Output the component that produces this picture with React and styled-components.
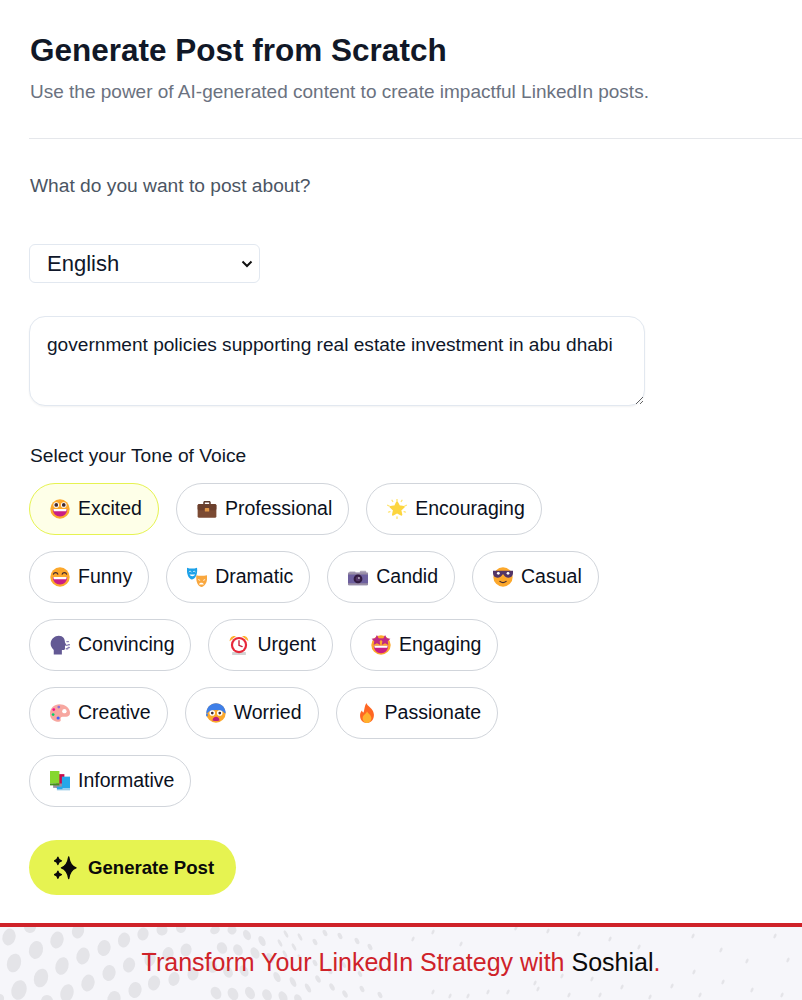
import React from "react";
import styled, { createGlobalStyle } from "styled-components";

const Global = createGlobalStyle`
  html, body { margin: 0; padding: 0; background: #fff; overflow: hidden; }
  * { box-sizing: border-box; }
`;

const Page = styled.div`
  width: 802px;
  height: 1000px;
  display: flex;
  flex-direction: column;
  font-family: "Liberation Sans", Arial, sans-serif;
  color: #0f172a;
`;
const Main = styled.main`
  flex: 1;
  padding: 32px 0 0 29px;
`;
const Title = styled.h1`
  margin: 0;
  font-size: 31.500px;
  line-height: 36px;
  font-weight: 700;
  color: #111827;
  padding-left: 1px;
`;
const Subtitle = styled.p`
  margin: 10px 0 0;
  font-size: 19px;
  line-height: 28px;
  color: #6b7280;
  padding-left: 1px;
`;
const Divider = styled.hr`
  margin: 32px 0 33px;
  border: 0;
  border-top: 1px solid #e5e7eb;
`;
const Label = styled.label`
  display: block;
  font-size: 19.200px;
  line-height: 28px;
  padding-left: 1px;
  color: ${(p) => (p.$muted ? "#4b5563" : "#111827")};
`;
const LangSelect = styled.select`
  display: block;
  appearance: none;
  margin-top: 44px;
  width: 231px;
  height: 39px;
  padding: 0 8px 0 17px;
  background: #fff url("data:image/svg+xml,%3Csvg xmlns='http://www.w3.org/2000/svg' width='12' height='8' viewBox='0 0 12 8'%3E%3Cpath d='M1.500 1.500 6 6l4.500-4.500' fill='none' stroke='%23111' stroke-width='2'/%3E%3C/svg%3E") no-repeat 211px 15px;
  border: 1px solid #e2e8f0;
  border-radius: 6px;
  font-family: inherit;
  font-size: 22px;
  color: #0f172a;
`;
const Prompt = styled.textarea`
  display: block;
  margin: 33px 0 36px;
  width: 616px;
  height: 90px;
  padding: 14px 17px;
  border: 1px solid #e2e8f0;
  border-radius: 16px;
  box-shadow: 0 1px 2px rgba(0, 0, 0, 0.05);
  font-family: inherit;
  font-size: 19.100px;
  line-height: 28px;
  color: #0f172a;
  outline: none;
`;
const Chips = styled.div`
  margin-top: 13px;
  width: 616px;
  display: flex;
  flex-wrap: wrap;
  gap: 16px 17px;
`;
const Chip = styled.button`
  height: 52px;
  display: inline-flex;
  align-items: center;
  gap: 8px;
  padding: 0 16px 2px 20px;
  border-radius: 26px;
  border: 1px solid ${(p) => (p.$active ? "#e6f351" : "#d1d5db")};
  background: ${(p) => (p.$active ? "#feffe8" : "#fff")};
  font-family: inherit;
  font-size: 19.500px;
  color: #0b1020;
`;
const Generate = styled.button`
  margin-top: 33px;
  width: 207px;
  height: 55px;
  display: flex;
  align-items: center;
  gap: 11px;
  padding: 0 0 0 25px;
  border: 0;
  border-radius: 28px;
  background: #e6f351;
  font-family: inherit;
  font-size: 18.600px;
  font-weight: 700;
  color: #0a0a0a;
`;
const Footer = styled.footer`
  position: relative;
  height: 77px;
  flex: none;
  border-top: 4px solid #cf2229;
  background: #f6f6fa;
  overflow: hidden;
  display: flex;
  align-items: center;
  justify-content: center;
`;
const FooterArt = styled.svg`
  position: absolute;
  left: 0;
  top: 0;
`;
const Slogan = styled.p`
  position: relative;
  margin: 0 0 3px;
  font-size: 25px;
  line-height: 30px;
  color: #cf2229;
`;
const Brand = styled.span`
  color: #0a0a0a;
`;
const EmojiBox = styled.svg`
  width: 20px;
  height: 20px;
  flex: none;
  margin-top: 2px;
`;

const Emoji = ({ children }) => <EmojiBox viewBox="0 0 32 32">{children}</EmojiBox>;

const Face = () => <circle cx="16" cy="16" r="15.500" fill="#fca82c" />;
const Mouth = ({ y = 16 }) => (
  <>
    <path d={`M4.500 ${y}h23c0 7-5 12-11.500 12S4.500 ${y + 7} 4.500 ${y}z`} fill="#c81e85" />
    <path d={`M5.500 ${y}h21c0 2-.5 3.500-1 3.500H6.500c-.5 0-1-1.500-1-3.500z`} fill="#fff" />
  </>
);
const icons = {
  excited: (
    <Emoji>
      <Face />
      <circle cx="10" cy="9.500" r="4.500" fill="#fff" />
      <circle cx="22" cy="9.500" r="4.500" fill="#fff" />
      <circle cx="10" cy="9.500" r="3" fill="#402a32" />
      <circle cx="22" cy="9.500" r="3" fill="#402a32" />
      <Mouth />
    </Emoji>
  ),
  funny: (
    <Emoji>
      <Face />
      <path d="M5.500 11.500c1-3.500 6-3.500 7 0M19.500 11.500c1-3.500 6-3.500 7 0" fill="none" stroke="#402a32" strokeWidth="2" strokeLinecap="round" />
      <Mouth />
    </Emoji>
  ),
  professional: (
    <Emoji>
      <path d="M10 9V5.500C10 4 11 3 12.500 3h7C21 3 22 4 22 5.500V9h-2.500V5.500h-7V9z" fill="#5c3a2c" />
      <rect x="1" y="8" width="30" height="22" rx="2.500" fill="#7b4a33" />
      <rect x="1" y="8" width="30" height="10" rx="2.500" fill="#6b3f2c" />
      <rect x="12.500" y="14.500" width="7" height="5.500" rx="1" fill="#e19747" />
    </Emoji>
  ),
  encouraging: (
    <Emoji>
      <path d="M16 5l3.500 6.500 7.500 1-5.500 5.200 1.500 7.500L16 21.500l-6.500 3.700 1.500-7.500-5.500-5.200 7.500-1z" fill="#fcd53f" strokeLinejoin="round" stroke="#fcd53f" strokeWidth="3" />
      <path d="M16 .8v2.200M16 28.500v2.700M1 10l2.500 1.200M31 10l-2.500 1.200M2.500 21l2.200-.7M29.500 21l-2.200-.7M8 2l1.200 2M24 2l-1.200 2" stroke="#ffe571" strokeWidth="2.200" strokeLinecap="round" />
    </Emoji>
  ),
  dramatic: (
    <Emoji>
      <path d="M0 1c5 1.800 11 1.800 16 0 1 8-.5 17-8 19C1.500 18.500-1 9 0 1z" fill="#1da1e8" />
      <path d="M3 8c1-1.500 3-1.500 4 0M9.500 8c1-1.500 3-1.500 4 0" fill="none" stroke="#fff" strokeWidth="1.300" />
      <path d="M4 12c2 3.500 7 3.500 9 0z" fill="#fff" />
      <path d="M15 13c4 1.400 11 1.400 17 0 1 8-1 17-9 19-7-2-9-11-8-19z" fill="#f9a73e" />
      <path d="M18 20l3 1.500M29 20l-3 1.500" stroke="#fff" strokeWidth="1.300" />
      <path d="M19 28c1-3.500 7-3.500 8 0z" fill="#fff" />
    </Emoji>
  ),
  candid: (
    <Emoji>
      <rect x="2" y="7" width="10" height="5" rx="1" fill="#b4acbc" />
      <rect x="19" y="6" width="10" height="6" rx="1" fill="#b4acbc" />
      <rect x="0" y="9" width="32" height="20" rx="2" fill="#6d5f9e" />
      <rect x="0" y="9" width="32" height="3" fill="#998ea4" />
      <rect x="0" y="26" width="32" height="3" fill="#998ea4" />
      <circle cx="16" cy="19" r="7" fill="#321b41" />
      <circle cx="16" cy="19" r="3.800" fill="#533566" />
      <circle cx="17.500" cy="17.500" r="1.300" fill="#fff" />
    </Emoji>
  ),
  casual: (
    <Emoji>
      <Face />
      <path d="M0 6h32v4c0 4-3 7-7 7-4 0-7-2-8-5h-2c-1 3-4 5-8 5-4 0-7-3-7-7z" fill="#533566" />
      <circle cx="8.500" cy="10" r="2.200" fill="#fff" />
      <circle cx="24" cy="10" r="2.200" fill="#fff" />
      <path d="M11 23c3 2.500 7 2.500 10 0" fill="none" stroke="#402a32" strokeWidth="2" strokeLinecap="round" />
    </Emoji>
  ),
  convincing: (
    <Emoji>
      <path d="M1 14C1 6 8 1 14 1c7 0 10 5 10 11 1 2 2 3 2 4l-2 1v4c0 2-1 3-3 3h-2v7H6v-7c-3-3-5-6-5-10z" fill="#635994" />
      <path d="M27 10.500h2.500M25.500 16.500h2M29 15.500h2M26 22h2.500M29 20h2" stroke="#8d82b8" strokeWidth="2.200" strokeLinecap="round" />
    </Emoji>
  ),
  urgent: (
    <Emoji>
      <path d="M1 10C1 4 6 0 11 2zM31 10c0-6-5-10-10-8z" fill="#ffb02e" />
      <rect x="5" y="27" width="22" height="5" rx="1" fill="#d3d3d3" />
      <circle cx="16" cy="16" r="13" fill="#e8283a" />
      <circle cx="16" cy="16" r="9.500" fill="#fff" />
      <path d="M16 9v7.500l5 2" fill="none" stroke="#c8223a" strokeWidth="2.200" strokeLinecap="round" />
    </Emoji>
  ),
  engaging: (
    <Emoji>
      <Face />
      <path d="M9.500 0l2.700 5.300 5.800.8-4.200 4 1 5.800-5.300-2.800-5.300 2.800 1-5.800L1 6.100l5.800-.8z" fill="#c02a84" />
      <path d="M22.500 0l2.700 5.300 5.800.8-4.200 4 1 5.800-5.300-2.800-5.300 2.800 1-5.800-4.200-4 5.800-.8z" fill="#c02a84" />
      <Mouth y={17} />
    </Emoji>
  ),
  creative: (
    <Emoji>
      <path d="M15 2C7 2 0 8 0 17c0 8 6 13 14 13 3 0 3.500-2 3-4-.5-2 .5-4 3-4h6c3 0 6-2 6-6C32 7 23 2 15 2z" fill="#f7a7a0" />
      <circle cx="14" cy="6.500" r="2.200" fill="#8a6fd8" />
      <circle cx="6" cy="10.500" r="2.200" fill="#f70a8d" />
      <circle cx="5" cy="18.500" r="2.200" fill="#00d26a" />
      <circle cx="13" cy="24" r="2.500" fill="#3f5fff" />
      <circle cx="23" cy="13" r="3.500" fill="#fff" />
    </Emoji>
  ),
  worried: (
    <Emoji>
      <Face />
      <path d="M.5 16C.5 7.500 7.500.5 16 .5S31.500 7.500 31.500 16c0 .5-1 1-2 0-3-4-7-5-13.500-5s-10.500 1-13.500 5c-1 1-2 .5-2 0z" fill="#3f7fe8" />
      <circle cx="10" cy="16" r="4.500" fill="#fff" />
      <circle cx="22" cy="16" r="4.500" fill="#fff" />
      <circle cx="10" cy="16" r="2.200" fill="#402a32" />
      <circle cx="22" cy="16" r="2.200" fill="#402a32" />
      <path d="M10.500 28c0-8 11-8 11 0 0 1-11 1-11 0z" fill="#bb1d80" />
      <path d="M1.500 16c-2 2-2 5 0 6 2-1 2-4 0-6z" fill="#3f7fe8" />
    </Emoji>
  ),
  passionate: (
    <Emoji>
      <path d="M15 0c1 5 11 8 12 18 .7 8-4.500 14-11 14S4 27 5 18c.3-3 2-5 3-6 .5 2 1 3 2.500 3C12 11 12 4 15 0z" fill="#ff6723" />
      <path d="M16 13c1 3 7 6 7 11 0 5-3.500 8-7 8s-7-3-7-8c0-5 6-7 7-11z" fill="#ffb02e" />
    </Emoji>
  ),
  informative: (
    <Emoji>
      <rect x="10" y="5" width="13" height="22" fill="#ca0b4a" />
      <rect x="5" y="20" width="15" height="7" fill="#998ea4" />
      <rect x="0" y="0" width="15" height="20" fill="#86d72f" />
      <rect x="0" y="20" width="15" height="3" fill="#44911b" />
      <rect x="19" y="9" width="13" height="19" fill="#26a7e8" />
      <rect x="11" y="28" width="21" height="3" fill="#9ccde8" />
      <rect x="11" y="25" width="9" height="4" fill="#26a7e8" />
    </Emoji>
  ),
};

const tones = [
  ["excited", "Excited"],
  ["professional", "Professional"],
  ["encouraging", "Encouraging"],
  ["funny", "Funny"],
  ["dramatic", "Dramatic"],
  ["candid", "Candid"],
  ["casual", "Casual"],
  ["convincing", "Convincing"],
  ["urgent", "Urgent"],
  ["engaging", "Engaging"],
  ["creative", "Creative"],
  ["worried", "Worried"],
  ["passionate", "Passionate"],
  ["informative", "Informative"],
];

const Sparkles = () => (
  <svg width="23" height="24" viewBox="0 0 23 24" fill="#0a0a0a" stroke="#0a0a0a" strokeLinejoin="round">
    <path d="M14.700 1Q16 9.800 22 11.800 16 13.800 14.700 22.500 13.400 13.800 7.400 11.800 13.400 9.800 14.700 1z" strokeWidth="1.400" />
    <path d="M3.900 1.200Q4.500 4.200 7.500 4.900 4.500 5.600 3.900 8.600 3.300 5.600.3 4.900 3.300 4.200 3.900 1.200z" strokeWidth="1.200" />
    <path d="M3.900 15Q4.500 18 7.500 18.700 4.500 19.400 3.900 22.400 3.300 19.400.3 18.700 3.300 18 3.900 15z" strokeWidth="1.200" />
  </svg>
);

// Halftone wave, footer coordinates: large dots on the left, fading to flecks on the right.
const bigDots = [
  [9, 10, 6.500, 8.500], [30, 0, 6, 6], [57, 13, 6.500, 8.500], [78, 4, 6, 7.500], [36, 23, 7, 9],
  [104, 21, 6.500, 8], [124, 13, 6, 7.500], [143, 7, 5.500, 6.500], [162, 3, 5.500, 5.500], [181, 1, 5, 5],
  [14, 36, 7, 9.500], [62, 39, 6.500, 9], [83, 29, 6.500, 8.500], [129, 38, 6, 7.500], [168, 27, 5.500, 7],
  [186, 23, 5.500, 6.500], [150, 32, 5.500, 7.500], [41, 51, 7, 9.500], [88, 56, 6.500, 8.500], [109, 46, 6.500, 8],
  [154, 56, 6, 7.500], [174, 52, 5.500, 7], [193, 47, 5.500, 6.500], [19, 63, 7.500, 10], [67, 66, 6.500, 9],
  [135, 63, 6.500, 8], [114, 72, 6.500, 8], [47, 74, 6, 6], [0, 72, 4, 5],
];
const midDots = [
  [215, 3, 5, 4], [232, 3, 4.500, 4.500], [247, 8, 3.500, 5.500], [262, 14, 3, 5.500],
  [222, 21, 5, 6], [238, 23, 4.500, 6], [255, 26, 4, 6], [270, 31, 3, 5.500],
  [212, 40, 5, 6], [228, 45, 4.500, 6], [244, 44, 4, 6], [277, 50, 3, 5.500], [293, 55, 2.500, 5.500], [308, 61, 2.200, 5],
  [216, 66, 5, 6.500], [233, 67, 5, 6.500], [250, 66, 4.500, 6.500], [267, 68, 4.500, 6], [283, 70, 4, 6], [298, 72, 3.500, 5],
  [286, 7, 1.500, 4], [300, 10, 1.500, 4], [280, 16, 1.500, 4], [294, 20, 1.500, 4], [285, 27, 1.500, 4], [300, 31, 1.500, 4],
  [315, 15, 2, 3.500], [325, 6, 2, 3.500], [340, 9, 2, 3.500], [357, 14, 2, 3.500], [370, 20, 2, 3.500],
  [315, 36, 2, 3.500], [330, 44, 2, 3.500], [344, 38, 1.800, 3.200], [360, 47, 1.800, 3.200], [378, 41, 1.800, 3.200],
  [318, 52, 2.200, 4], [332, 60, 2.200, 4], [345, 67, 2.200, 4], [362, 62, 2, 3.500], [380, 68, 2, 3.500],
];
const flecks = [
  [33, 5], [13, 12], [116, 1], [148, 4], [179, 7], [210, 12], [293, 9], [375, 9],
  [61, 17], [239, 20], [321, 23], [347, 34], [388, 33], [294, 45], [272, 59], [323, 55],
  [222, 60], [192, 52], [162, 49], [138, 62], [108, 65], [169, 68], [200, 68], [250, 70],
  [300, 68], [352, 63], [382, 68], [135, 56], [88, 65], [68, 69], [50, 69], [33, 65],
];

const Halftone = () => (
  <FooterArt width="802" height="73" aria-hidden="true">
    <g fill="#e4e4e8">
      {bigDots.map(([x, y, rx, ry], i) => (
        <ellipse key={i} cx={x} cy={y} rx={rx} ry={ry} transform={`rotate(15 ${x} ${y})`} />
      ))}
      {midDots.map(([x, y, rx, ry], i) => (
        <ellipse key={i} cx={x} cy={y} rx={rx} ry={ry} transform={`rotate(-28 ${x} ${y})`} />
      ))}
      {flecks.map(([x, y], i) => (
        <ellipse key={i} cx={x + 400} cy={y} rx="1.300" ry="2.600" transform={`rotate(25 ${x + 400} ${y})`} />
      ))}
    </g>
  </FooterArt>
);

export default function App() {
  return (
    <Page>
      <Global />
      <Main>
        <Title>Generate Post from Scratch</Title>
        <Subtitle>Use the power of AI-generated content to create impactful LinkedIn posts.</Subtitle>
        <Divider />
        <Label $muted>What do you want to post about?</Label>
        <LangSelect defaultValue="English">
          <option>English</option>
          <option>Arabic</option>
        </LangSelect>
        <Prompt defaultValue="government policies supporting real estate investment in abu dhabi" />
        <Label>Select your Tone of Voice</Label>
        <Chips>
          {tones.map(([key, label], i) => (
            <Chip key={key} $active={i === 0}>
              {icons[key]}
              {label}
            </Chip>
          ))}
        </Chips>
        <Generate>
          <Sparkles />
          Generate Post
        </Generate>
      </Main>
      <Footer>
        <Halftone />
        <Slogan>
          Transform Your LinkedIn Strategy with <Brand>Soshial</Brand>.
        </Slogan>
      </Footer>
    </Page>
  );
}
